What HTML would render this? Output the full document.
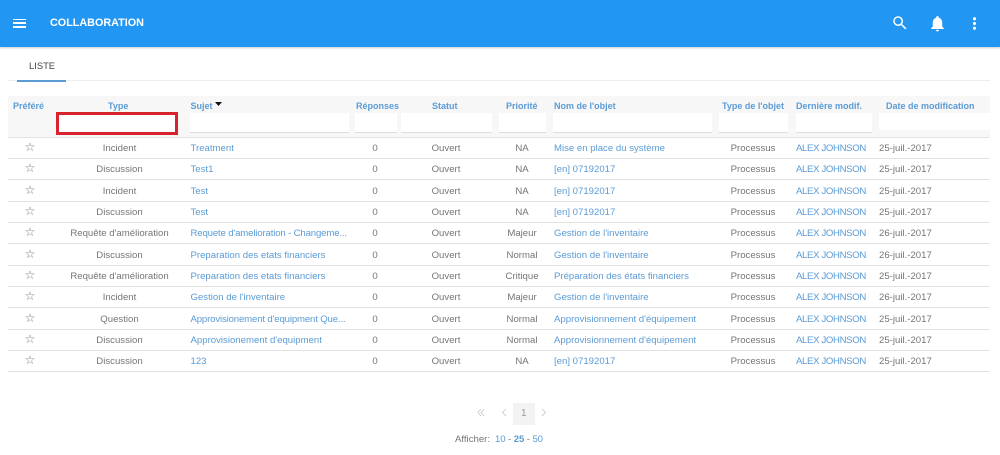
<!DOCTYPE html>
<html lang="fr"><head><meta charset="utf-8"><title>Collaboration</title>
<style>
html,body{margin:0;padding:0;background:#fff}
body{width:1000px;height:455px;overflow:hidden;position:relative;font-family:"Liberation Sans",sans-serif;font-size:9.6px;color:#757575}
.top{position:absolute;left:0;top:0;width:1000px;height:47px;background:#2196f3;box-shadow:0 1px 2px rgba(0,0,0,.2)}
.title{position:absolute;left:50px;top:15.500px;color:#fff;font-weight:bold;font-size:10.800px;line-height:14px;white-space:nowrap}
.burger{position:absolute;left:13px;width:13px;height:1.500px;background:#fff}
.top svg{position:absolute;fill:#fff}
.liste{position:absolute;left:29px;top:58.500px;font-size:9.400px;line-height:13px;color:#444}
.tl{position:absolute;left:8px;top:80px;width:982px;height:1px;background:#eee}
.tu{position:absolute;left:17px;top:80px;width:49px;height:1.500px;background:#5b9bd5}
.hb{position:absolute;left:8px;top:96px;width:982px;height:41px;background:#f7f7f7;border-bottom:1px solid #e2e2e2}
.h{position:absolute;top:100px;font-weight:bold;font-size:9px;line-height:13px;color:#5b9bd5;white-space:nowrap;filter:blur(.25px)}
.i{position:absolute;top:113px;height:19px;background:#fff;border-bottom:1px solid #ddd}
.red{position:absolute;left:56px;top:112px;width:116px;height:17px;border:3px solid #d8232f;background:#fff}
.r{position:absolute;left:8px;width:982px;height:21px;border-bottom:1px solid #e2e2e2}
.r span{position:absolute;top:5px;line-height:13px;white-space:nowrap;filter:blur(.25px)}
.r a,.p a{color:#5b9bd5;text-decoration:none}
.r span.s{left:14px;width:16px;text-align:center;font-size:12px;top:4px;color:#777}
.t{left:51px;width:121px;text-align:center}
.u{left:182.500px}
.n{left:347px;width:40px;text-align:center}
.o{left:408px;width:60px;text-align:center}
.q{left:489px;width:50px;text-align:center}
.m{left:546px}
.y{left:715px;width:60px;text-align:center}
.d{left:788px;letter-spacing:-.35px}
.e{left:871px}
.p{position:absolute;line-height:13px;white-space:nowrap;filter:blur(.25px)}
.k{letter-spacing:-.15px}
</style></head><body>
<div class="top">
<div class="burger" style="top:18.500px"></div><div class="burger" style="top:22.300px"></div><div class="burger" style="top:26px"></div>
<div class="title">COLLABORATION</div>
<svg style="left:891px;top:14px" width="18" height="18" viewBox="0 0 24 24"><path d="M15.5 14h-.79l-.28-.27A6.47 6.47 0 0 0 16 9.5 6.5 6.5 0 1 0 9.5 16c1.61 0 3.09-.59 4.23-1.57l.27.28v.79l5 4.99L20.49 19l-4.99-5zm-6 0C7.01 14 5 11.99 5 9.5S7.01 5 9.5 5 14 7.01 14 9.5 11.99 14 9.5 14z"/></svg>
<svg style="left:928px;top:14px" width="19" height="19" viewBox="0 0 24 24"><path d="M12 22c1.1 0 2-.9 2-2h-4c0 1.1.9 2 2 2zm6-6v-5c0-3.07-1.63-5.64-4.5-6.32V4c0-.83-.67-1.5-1.500-1.500s-1.500.67-1.500 1.500v.68C7.640 5.360 6 7.920 6 11v5l-2 2v1h16v-1l-2-2z"/></svg>
<svg style="left:965px;top:14px" width="19" height="19" viewBox="0 0 24 24"><path d="M12 8c1.100 0 2-.9 2-2s-.9-2-2-2-2 .9-2 2 .9 2 2 2zm0 2c-1.100 0-2 .9-2 2s.9 2 2 2 2-.9 2-2-.9-2-2-2zm0 6c-1.100 0-2 .9-2 2s.9 2 2 2 2-.9 2-2-.9-2-2-2z"/></svg>
</div>
<div class="liste">LISTE</div><div class="tl"></div><div class="tu"></div>
<div class="hb"></div>
<div class="h" style="left:13px">Préféré</div>
<div class="h" style="left:108px">Type</div>
<div class="h" style="left:190.500px">Sujet</div>
<svg style="position:absolute;left:215px;top:102px" width="7" height="4"><path d="M0 0h7L3.500 4z" fill="#111"/></svg>
<div class="h" style="left:356px">Réponses</div>
<div class="h" style="left:432px">Statut</div>
<div class="h" style="left:506px">Priorité</div>
<div class="h" style="left:554px">Nom de l'objet</div>
<div class="h" style="left:722px">Type de l'objet</div>
<div class="h" style="left:796px">Dernière modif.</div>
<div class="h" style="left:886px">Date de modification</div>
<div class="red"></div>
<div class="i" style="left:190px;width:159px"></div>
<div class="i" style="left:355px;width:42px"></div>
<div class="i" style="left:401px;width:91px"></div>
<div class="i" style="left:499px;width:47px"></div>
<div class="i" style="left:553px;width:159px"></div>
<div class="i" style="left:719px;width:69px"></div>
<div class="i" style="left:796px;width:76px"></div>
<div class="i" style="left:879px;width:111px;height:17px;border:0"></div>

<div class="r" style="top:137px"><span class="s">☆</span><span class="t">Incident</span><span class="u"><a href="#">Treatment</a></span><span class="n">0</span><span class="o">Ouvert</span><span class="q">NA</span><span class="m"><a href="#">Mise en place du système</a></span><span class="y">Processus</span><span class="d"><a href="#">ALEX JOHNSON</a></span><span class="e">25-juil.-2017</span></div>
<div class="r" style="top:158.300px"><span class="s">☆</span><span class="t">Discussion</span><span class="u"><a href="#">Test1</a></span><span class="n">0</span><span class="o">Ouvert</span><span class="q">NA</span><span class="m"><a href="#">[en] 07192017</a></span><span class="y">Processus</span><span class="d"><a href="#">ALEX JOHNSON</a></span><span class="e">25-juil.-2017</span></div>
<div class="r" style="top:179.600px"><span class="s">☆</span><span class="t">Incident</span><span class="u"><a href="#">Test</a></span><span class="n">0</span><span class="o">Ouvert</span><span class="q">NA</span><span class="m"><a href="#">[en] 07192017</a></span><span class="y">Processus</span><span class="d"><a href="#">ALEX JOHNSON</a></span><span class="e">25-juil.-2017</span></div>
<div class="r" style="top:201px"><span class="s">☆</span><span class="t">Discussion</span><span class="u"><a href="#">Test</a></span><span class="n">0</span><span class="o">Ouvert</span><span class="q">NA</span><span class="m"><a href="#">[en] 07192017</a></span><span class="y">Processus</span><span class="d"><a href="#">ALEX JOHNSON</a></span><span class="e">25-juil.-2017</span></div>
<div class="r" style="top:222.300px"><span class="s">☆</span><span class="t">Requête d'amélioration</span><span class="u k"><a href="#">Requete d'amelioration - Changeme...</a></span><span class="n">0</span><span class="o">Ouvert</span><span class="q">Majeur</span><span class="m"><a href="#">Gestion de l'inventaire</a></span><span class="y">Processus</span><span class="d"><a href="#">ALEX JOHNSON</a></span><span class="e">26-juil.-2017</span></div>
<div class="r" style="top:243.700px"><span class="s">☆</span><span class="t">Discussion</span><span class="u"><a href="#">Preparation des etats financiers</a></span><span class="n">0</span><span class="o">Ouvert</span><span class="q">Normal</span><span class="m"><a href="#">Gestion de l'inventaire</a></span><span class="y">Processus</span><span class="d"><a href="#">ALEX JOHNSON</a></span><span class="e">26-juil.-2017</span></div>
<div class="r" style="top:265px"><span class="s">☆</span><span class="t">Requête d'amélioration</span><span class="u"><a href="#">Preparation des etats financiers</a></span><span class="n">0</span><span class="o">Ouvert</span><span class="q">Critique</span><span class="m"><a href="#">Préparation des états financiers</a></span><span class="y">Processus</span><span class="d"><a href="#">ALEX JOHNSON</a></span><span class="e">25-juil.-2017</span></div>
<div class="r" style="top:286.400px"><span class="s">☆</span><span class="t">Incident</span><span class="u"><a href="#">Gestion de l'inventaire</a></span><span class="n">0</span><span class="o">Ouvert</span><span class="q">Majeur</span><span class="m"><a href="#">Gestion de l'inventaire</a></span><span class="y">Processus</span><span class="d"><a href="#">ALEX JOHNSON</a></span><span class="e">26-juil.-2017</span></div>
<div class="r" style="top:307.700px"><span class="s">☆</span><span class="t">Question</span><span class="u k"><a href="#">Approvisionement d'equipment Que...</a></span><span class="n">0</span><span class="o">Ouvert</span><span class="q">Normal</span><span class="m"><a href="#">Approvisionnement d'équipement</a></span><span class="y">Processus</span><span class="d"><a href="#">ALEX JOHNSON</a></span><span class="e">25-juil.-2017</span></div>
<div class="r" style="top:329px"><span class="s">☆</span><span class="t">Discussion</span><span class="u"><a href="#">Approvisionement d'equipment</a></span><span class="n">0</span><span class="o">Ouvert</span><span class="q">Normal</span><span class="m"><a href="#">Approvisionnement d'équipement</a></span><span class="y">Processus</span><span class="d"><a href="#">ALEX JOHNSON</a></span><span class="e">25-juil.-2017</span></div>
<div class="r" style="top:350.400px"><span class="s">☆</span><span class="t">Discussion</span><span class="u"><a href="#">123</a></span><span class="n">0</span><span class="o">Ouvert</span><span class="q">NA</span><span class="m"><a href="#">[en] 07192017</a></span><span class="y">Processus</span><span class="d"><a href="#">ALEX JOHNSON</a></span><span class="e">25-juil.-2017</span></div>

<div style="position:absolute;left:513px;top:403px;width:22px;height:22px;background:#f3f3f3"></div>
<svg style="position:absolute;left:476px;top:408px" width="72" height="10" fill="none" stroke="#c4c4c4" stroke-width=".8"><path d="M5 1L2 4.500 5 8M8 1L5 4.500 8 8M30 1L26.500 4.500 30 8M66 1L69.500 4.500 66 8"/></svg>
<div class="p" style="left:521px;top:407px;color:#999;font-size:10px">1</div>
<div class="p" style="left:455px;top:432.500px">Afficher:</div>
<div class="p" style="left:495px;top:432.500px;letter-spacing:-.1px"><a href="#">10</a> - <a href="#"><b>25</b></a> - <a href="#">50</a></div>
</body></html>
